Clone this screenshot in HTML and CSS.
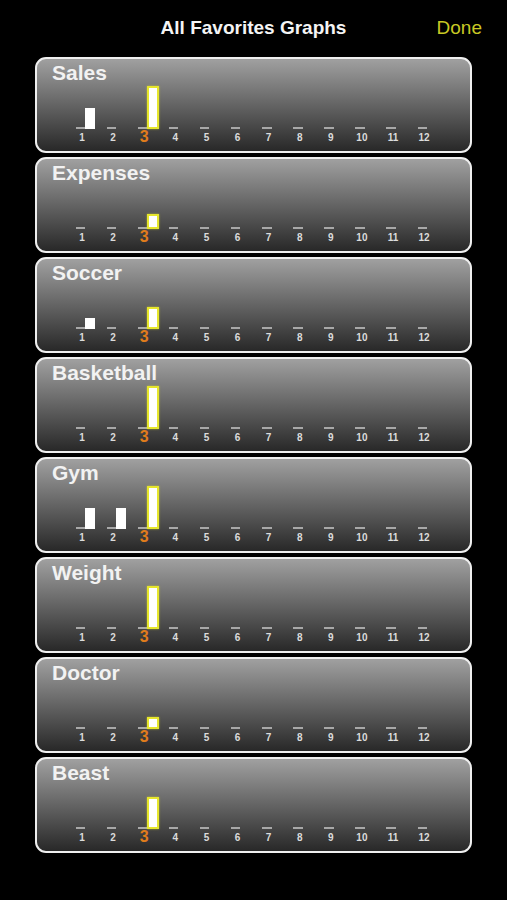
FILE: index.html
```html
<!DOCTYPE html>
<html lang="en">
<head>
  <meta charset="UTF-8">
  <meta name="viewport" content="width=device-width, initial-scale=1.0">
  <title>All Favorites Graphs</title>
  <link rel="stylesheet" href="styles.css">
</head>
<body>
  <div class="nav">
    <span></span>
    <h1>All Favorites Graphs</h1>
    <button class="done">Done</button>
  </div>

  <div class="list" id="list"></div>

  <script>
    const list = document.getElementById('list');
    const currentMonth = 3;

    // bar heights in px for months 1..12 (43 = max)
    const graphs = [
      { name: 'Sales', values: [21, 0, 43] },
      { name: 'Expenses', values: [0, 0, 15] },
      { name: 'Soccer', values: [11, 0, 22] },
      { name: 'Basketball', values: [0, 0, 43] },
      { name: 'Gym', values: [21, 21, 43] },
      { name: 'Weight', values: [0, 0, 43] },
      { name: 'Doctor', values: [0, 0, 12] },
      { name: 'Beast', values: [0, 0, 32] }
    ];

    graphs.forEach(graph => {
      const card = document.createElement('div');
      card.className = 'card';

      const title = document.createElement('div');
      title.className = 'card-title';
      title.textContent = graph.name;
      card.appendChild(title);

      const chart = document.createElement('div');
      chart.className = 'chart';

      for (let month = 1; month <= 12; month++) {
        const col = document.createElement('div');
        col.className = 'col';

        const plot = document.createElement('div');
        plot.className = 'plot';

        const dash = document.createElement('div');
        dash.className = 'dash';
        plot.appendChild(dash);

        const value = graph.values[month - 1] || 0;
        if (value > 0) {
          const bar = document.createElement('div');
          bar.className = month === currentMonth ? 'bar current' : 'bar';
          bar.style.height = value + 'px';
          plot.appendChild(bar);
        }

        const label = document.createElement('div');
        label.className = month === currentMonth ? 'label current' : 'label';
        label.textContent = month;

        col.appendChild(plot);
        col.appendChild(label);
        chart.appendChild(col);
      }

      card.appendChild(chart);
      list.appendChild(card);
    });
  </script>
</body>
</html>
```

FILE: styles.css
```css
body {
  margin: 0;
  background-color: #000;
  font-family: "Liberation Sans", Arial, sans-serif;
  color: #fff;
}

.nav {
  display: grid;
  grid-template-columns: 1fr auto 1fr;
  align-items: center;
  padding: 17px 0 18px;
  height: 22px;
}

.nav h1 {
  margin: 0;
  font-size: 19px;
  line-height: 22px;
  font-weight: bold;
  color: #f4f4f4;
}

.done {
  justify-self: end;
  margin-right: 25px;
  padding: 0;
  border: none;
  background: none;
  font-family: inherit;
  font-size: 19px;
  line-height: 22px;
  color: #c9c924;
}

.list {
  display: flex;
  flex-direction: column;
  gap: 4px;
  padding: 0 35px;
}

.card {
  box-sizing: border-box;
  height: 96px;
  border: 2px solid #efefef;
  border-radius: 11px;
  background: linear-gradient(to bottom, #a0a0a0 0%, #707070 40%, #282828 100%);
  padding: 2px 0 0 15px;
}

.card-title {
  font-size: 21px;
  line-height: 24px;
  font-weight: bold;
  color: #f2f2f2;
}

.chart {
  display: grid;
  grid-template-columns: repeat(12, 31.1px);
  margin-left: 14.5px;
}

.col {
  display: flex;
  flex-direction: column;
}

.plot {
  height: 44px;
  display: flex;
  align-items: flex-end;
  padding-left: 9px;
}

.dash {
  width: 9.5px;
  height: 2px;
  background-color: #a8a8a8;
}

.bar {
  width: 10px;
  background-color: #fff;
}

.bar.current {
  box-sizing: border-box;
  width: 12px;
  border: 2px solid #e6e62c;
  box-shadow: 0 0 2px rgba(230, 230, 44, 0.6);
}

.label {
  height: 14px;
  margin-top: 1px;
  display: flex;
  align-items: center;
  justify-content: center;
  font-size: 10px;
  font-weight: bold;
  color: #dcdcdc;
}

.label.current {
  font-size: 16px;
  color: #e07c1c;
}
```
